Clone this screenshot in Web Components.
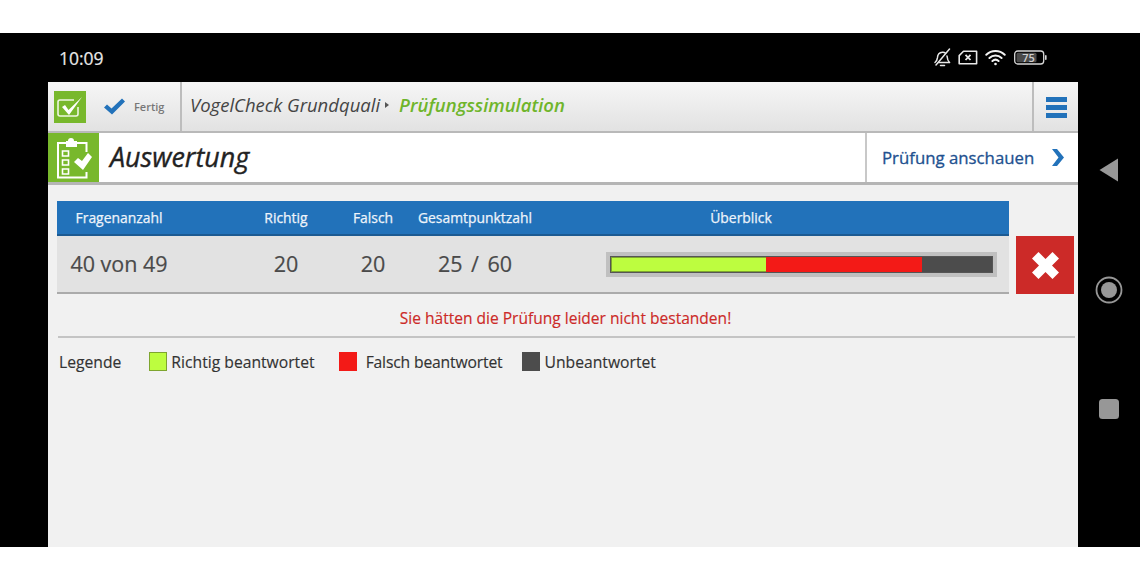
<!DOCTYPE html>
<html lang="de">
<head>
<meta charset="utf-8">
<title>Auswertung</title>
<style>
  html, body { margin: 0; background: #fff; }
  body { font-family: "Open Sans", "Noto Sans", sans-serif; height: 580px; overflow: hidden; padding-top: 33px; box-sizing: border-box; }
</style>
</head>
<body>
<phone-frame>
  <status-bar slot="status" time="10:09"></status-bar>
  <app-toolbar slot="app"></app-toolbar>
  <title-bar slot="app" heading="Auswertung" action="Prüfung anschauen"></title-bar>
  <result-table slot="app"></result-table>
  <result-message slot="app">Sie hätten die Prüfung leider nicht bestanden!</result-message>
  <result-legend slot="app"></result-legend>
  <nav-buttons slot="nav"></nav-buttons>
</phone-frame>

<script>
class PhoneFrame extends HTMLElement {
  constructor() {
    super();
    this.shadowDOM = this.attachShadow({ mode: 'open' });
    this.shadowDOM.innerHTML = `
      <style>
        :host { display: block; height: 514px; background: #000; overflow: hidden; }
        .main { display: flex; height: 465px; }
        .app { width: 1030px; margin-left: 48px; background: #f1f1f1; display: flex; flex-direction: column; }
        .nav { width: 62px; }
      </style>
      <slot name="status"></slot>
      <div class="main">
        <div class="app"><slot name="app"></slot></div>
        <div class="nav"><slot name="nav"></slot></div>
      </div>
    `;
  }
}

class StatusBar extends HTMLElement {
  constructor() {
    super();
    this.shadowDOM = this.attachShadow({ mode: 'open' });
  }

  connectedCallback() {
    this.shadowDOM.innerHTML = `
      <style>
        :host { display: flex; height: 49px; align-items: center; color: #e8e8e8; padding: 0 93px 0 59px; box-sizing: border-box; }
        .time { font-size: 17.5px; flex: 1; -webkit-text-stroke: .2px #e8e8e8; }
        .icons { display: flex; align-items: center; margin-top: -1px; }
        svg { display: block; }
      </style>
      <span class="time">${this.getAttribute('time')}</span>
      <div class="icons">
        <svg width="19" height="19" viewBox="0 0 19 19" fill="none" stroke="#e8e8e8" stroke-width="1.5" stroke-linejoin="round" stroke-linecap="round">
          <path d="M2 14.500c1.600-1.300 2.200-2.600 2.400-4.600.2-3 1.900-5.400 5-5.600 1.300-.1 2.400.3 3.200 1M14 8c.2 2.900.9 5 2.600 6.500H5.500"/>
          <path d="M7.500 17.500h4"/><path d="M3 17 16.500 1"/>
        </svg>
        <svg style="margin-left:6px" width="20" height="15" viewBox="0 0 20 15" fill="none" stroke="#e8e8e8" stroke-width="1.6" stroke-linejoin="round">
          <path d="M5.500 1.200H18.600V13.800H1.200V5.600Z"/>
          <path d="M7.500 4.800l5 5.200M12.500 4.800l-5 5.200" stroke-width="1.800"/>
        </svg>
        <svg style="margin-left:7px" width="21" height="17" viewBox="0 0 21 17" fill="none" stroke="#f2f2f2" stroke-width="2" stroke-linecap="round">
          <path d="M1.300 5.800C6.500.8 14.500.8 19.700 5.800"/>
          <path d="M4.400 9C7.900 5.700 13.100 5.700 16.600 9"/>
          <path d="M7.400 12c1.800-1.600 4.400-1.600 6.200 0"/>
          <circle cx="10.500" cy="15" r="1.300" fill="#f2f2f2" stroke="none"/>
        </svg>
        <svg style="margin-left:8px" width="33" height="15" viewBox="0 0 33 15">
          <rect x=".7" y="1" width="29" height="13" rx="3" fill="none" stroke="#d8d8d8" stroke-width="1.300"/>
          <rect x="2.500" y="2.800" width="20" height="9.400" rx="1.500" fill="#4a4a4a"/>
          <rect x="31" y="5" width="1.600" height="5" rx=".8" fill="#d8d8d8"/>
          <text x="14.500" y="11.500" font-size="11" font-weight="600" font-family="Open Sans, sans-serif" fill="#d0d0d0" text-anchor="middle">75</text>
        </svg>
      </div>
    `;
  }
}

class NavButtons extends HTMLElement {
  constructor() {
    super();
    this.shadowDOM = this.attachShadow({ mode: 'open' });
    this.shadowDOM.innerHTML = `
      <style>
        :host { display: flex; flex-direction: column; align-items: center; height: 100%; padding-top: 76px; box-sizing: border-box; }
        svg { display: block; }
      </style>
      <svg width="20" height="24" viewBox="0 0 20 24"><path d="M19 .5V23.500L.5 12Z" fill="#979797"/></svg>
      <svg style="margin-top:94px" width="28" height="28" viewBox="0 0 28 28" fill="none">
        <circle cx="14" cy="14" r="12.500" stroke="#979797" stroke-width="1.800"/>
        <circle cx="14" cy="14" r="8" fill="#979797"/>
      </svg>
      <svg style="margin-top:95px" width="20" height="20" viewBox="0 0 20 20"><rect width="20" height="20" rx="3.500" fill="#979797"/></svg>
    `;
  }
}

class AppToolbar extends HTMLElement {
  constructor() {
    super();
    this.shadowDOM = this.attachShadow({ mode: 'open' });
    this.shadowDOM.innerHTML = `
      <style>
        :host { display: flex; height: 51px; box-sizing: border-box; border-bottom: 2px solid #b9b9b9; background: linear-gradient(#f6f6f6, #e2e2e2); }
        .status { width: 134px; box-sizing: border-box; border-right: 2px solid #bdbdbd; display: flex; align-items: center; padding-left: 6px; }
        .logo { width: 32px; height: 32px; background: #78b82c; display: flex; align-items: center; justify-content: center; }
        .check { margin-left: 18px; }
        .done { font-size: 11px; color: #777; font-weight: 600; margin-left: 9px; }
        .crumb { flex: 1; display: flex; align-items: center; padding-left: 8px; font-size: 18.500px; font-style: italic; color: #454545; margin-top: -5px; }
        .sep { width: 0; height: 0; border-left: 4px solid #555; border-top: 3px solid transparent; border-bottom: 3px solid transparent; margin: 1px 10px 0 5px; }
        .crumb b { color: #6fb52b; font-weight: 600; }
        .menu { width: 46px; box-sizing: border-box; border-left: 2px solid #bdbdbd; display: flex; flex-direction: column; justify-content: center; align-items: center; gap: 3px; padding: 2px 0 0 1px; }
        .menu i { display: block; width: 21px; height: 5px; background: #2272ba; }
      </style>
      <div class="status">
        <div class="logo">
          <svg width="26" height="22" viewBox="0 0 26 22" fill="none">
            <path d="M17 4H3a2 2 0 0 0-2 2v12a2 2 0 0 0 2 2h16a2 2 0 0 0 2-2V11" stroke="#eef6e2" stroke-width="1.600"/>
            <path d="M5 11 8 9 11.500 14 25 1 12 19Z" fill="#fff"/>
          </svg>
        </div>
        <svg class="check" width="21" height="17" viewBox="0 0 21 17"><path d="M0 9.500 3 6.500 7.500 10.500 18 .5 21 3.500 8 16.500Z" fill="#2272ba"/></svg>
        <span class="done">Fertig</span>
      </div>
      <div class="crumb">VogelCheck Grundquali<span class="sep"></span><b>Prüfungssimulation</b></div>
      <div class="menu"><i></i><i></i><i></i></div>
    `;
  }
}

class TitleBar extends HTMLElement {
  constructor() {
    super();
    this.shadowDOM = this.attachShadow({ mode: 'open' });
  }

  connectedCallback() {
    this.shadowDOM.innerHTML = `
      <style>
        :host { display: flex; height: 52px; box-sizing: border-box; border-bottom: 3px solid #b5b5b5; background: #fff; }
        .icon { width: 51px; background: #78b82c; display: flex; align-items: center; padding-left: 9px; box-sizing: border-box; }
        h1 { flex: 1; margin: 0 0 0 11px; font-size: 26.900px; font-style: italic; font-weight: 500; color: #222; line-height: 47px; -webkit-text-stroke: .35px #222; }
        .action { width: 213px; box-sizing: border-box; border-left: 2px solid #c8c8c8; display: flex; align-items: center; padding-left: 15px; font-size: 16.800px; font-weight: 500; color: #21508f; -webkit-text-stroke: .3px #21508f; }
        .action svg { margin-left: 18px; }
      </style>
      <div class="icon">
        <svg width="36" height="42" viewBox="0 0 36 42" fill="none">
          <path d="M9 4H11a3 3 0 0 1 6 0H20V10H9Z" fill="#fff"/>
          <path d="M9 6H1V40.500H29.500V35M20 6H29.500V15" stroke="#fff" stroke-width="2"/>
          <path d="M5.500 14h6v5h-6zM5.500 23h6v5h-6zM5.500 32h6v5h-6z" stroke="#fff" stroke-width="1.600"/>
          <path d="M17 25 21 21 25 24 31 16 35 20 26 33Z" fill="#fff"/>
        </svg>
      </div>
      <h1>${this.getAttribute('heading')}</h1>
      <div class="action">${this.getAttribute('action')}
        <svg width="12" height="17" viewBox="0 0 12 17"><path d="M0 0H5L12 8.500 5 17H0L6.500 8.500Z" fill="#2272ba"/></svg>
      </div>
    `;
  }
}

class ScoreBar extends HTMLElement {
  constructor() {
    super();
    this.shadowDOM = this.attachShadow({ mode: 'open' });
    this.shadowDOM.innerHTML = `
      <style>
        :host { display: flex; box-sizing: border-box; width: 391px; height: 25px; border: 4px solid #c0c0c0; background: #555; padding: 1px; }
        i { display: block; height: 100%; box-sizing: border-box; }
        .right { width: 155px; background: #bdfd3f; border: 1px solid #7ea52f; border-right-width: 0; }
        .wrong { width: 156px; background: #f31a17; }
        .open { flex: 1; background: #4c4c4c; }
      </style>
      <i class="right"></i><i class="wrong"></i><i class="open"></i>
    `;
  }
}

class ResultTable extends HTMLElement {
  constructor() {
    super();
    this.shadowDOM = this.attachShadow({ mode: 'open' });
    this.shadowDOM.innerHTML = `
      <style>
        :host { display: flex; padding: 16px 0 0 9px; align-items: flex-end; }
        .table { width: 952px; }
        .head, .row { display: grid; grid-template-columns: 124px 62px 86px 88px 116px 1fr; text-align: center; align-items: center; }
        .head { height: 35px; box-sizing: border-box; background: #2272ba; border-bottom: 2px solid #1c5a92; color: #eef4fa; font-size: 13.900px; font-weight: 500; -webkit-text-stroke: .25px #eef4fa; }
        .head .over { padding-right: 60px; }
        .row { height: 58px; box-sizing: border-box; background: #e2e2e2; border-bottom: 2px solid #ababab; color: #4a4a4a; font-size: 21.500px; padding-bottom: 2px; -webkit-text-stroke: .2px #4a4a4a; }
        .row .total { word-spacing: 3px; }
        score-bar { margin-left: 73px; margin-top: 2px; }
        .fail { width: 58px; height: 58px; margin-left: 7px; background: #cc2a28; display: flex; align-items: center; justify-content: center; }
      </style>
      <div class="table">
        <div class="head">
          <span>Fragenanzahl</span><span></span><span>Richtig</span><span>Falsch</span><span>Gesamtpunktzahl</span><span class="over">Überblick</span>
        </div>
        <div class="row">
          <span>40 von 49</span><span></span><span>20</span><span>20</span><span class="total">25 / 60</span><score-bar></score-bar>
        </div>
      </div>
      <div class="fail">
        <svg width="27" height="27" viewBox="0 0 27 27"><path d="M6.500 0 13.500 7 20.500 0 27 6.500 20 13.500 27 20.500 20.500 27 13.500 20 6.500 27 0 20.500 7 13.500 0 6.500Z" fill="#fff"/></svg>
      </div>
    `;
  }
}

class ResultMessage extends HTMLElement {
  constructor() {
    super();
    this.shadowDOM = this.attachShadow({ mode: 'open' });
    this.shadowDOM.innerHTML = `
      <style>
        :host { display: block; margin: 12px 3px 0 10px; height: 32px; box-sizing: border-box; border-bottom: 2px solid #c4c4c4; text-align: center; color: #cc2a28; font-size: 15.550px; line-height: 24px; padding-right: 2px; -webkit-text-stroke: .15px #cc2a28; }
      </style>
      <slot></slot>
    `;
  }
}

class ResultLegend extends HTMLElement {
  constructor() {
    super();
    this.shadowDOM = this.attachShadow({ mode: 'open' });
    this.shadowDOM.innerHTML = `
      <style>
        :host { display: flex; align-items: center; padding: 12px 0 0 11px; height: 24px; color: #333; font-size: 15.700px; -webkit-text-stroke: .15px #333; }
        .key { width: 18px; height: 19px; box-sizing: border-box; margin-top: -2px; }
        .g { background: #bdfd3f; border: 1px solid #7ea52f; margin-left: 28px; margin-right: 4px; }
        .r { background: #f31a17; margin-left: 24px; margin-right: 9px; }
        .d { background: #4c4c4c; margin-left: 19px; margin-right: 5px; }
        .tight { letter-spacing: -.16px; }
      </style>
      <span>Legende</span>
      <i class="key g"></i><span>Richtig beantwortet</span>
      <i class="key r"></i><span class="tight">Falsch beantwortet</span>
      <i class="key d"></i><span>Unbeantwortet</span>
    `;
  }
}

customElements.define('phone-frame', PhoneFrame);
customElements.define('status-bar', StatusBar);
customElements.define('nav-buttons', NavButtons);
customElements.define('app-toolbar', AppToolbar);
customElements.define('title-bar', TitleBar);
customElements.define('score-bar', ScoreBar);
customElements.define('result-table', ResultTable);
customElements.define('result-message', ResultMessage);
customElements.define('result-legend', ResultLegend);
</script>
</body>
</html>
